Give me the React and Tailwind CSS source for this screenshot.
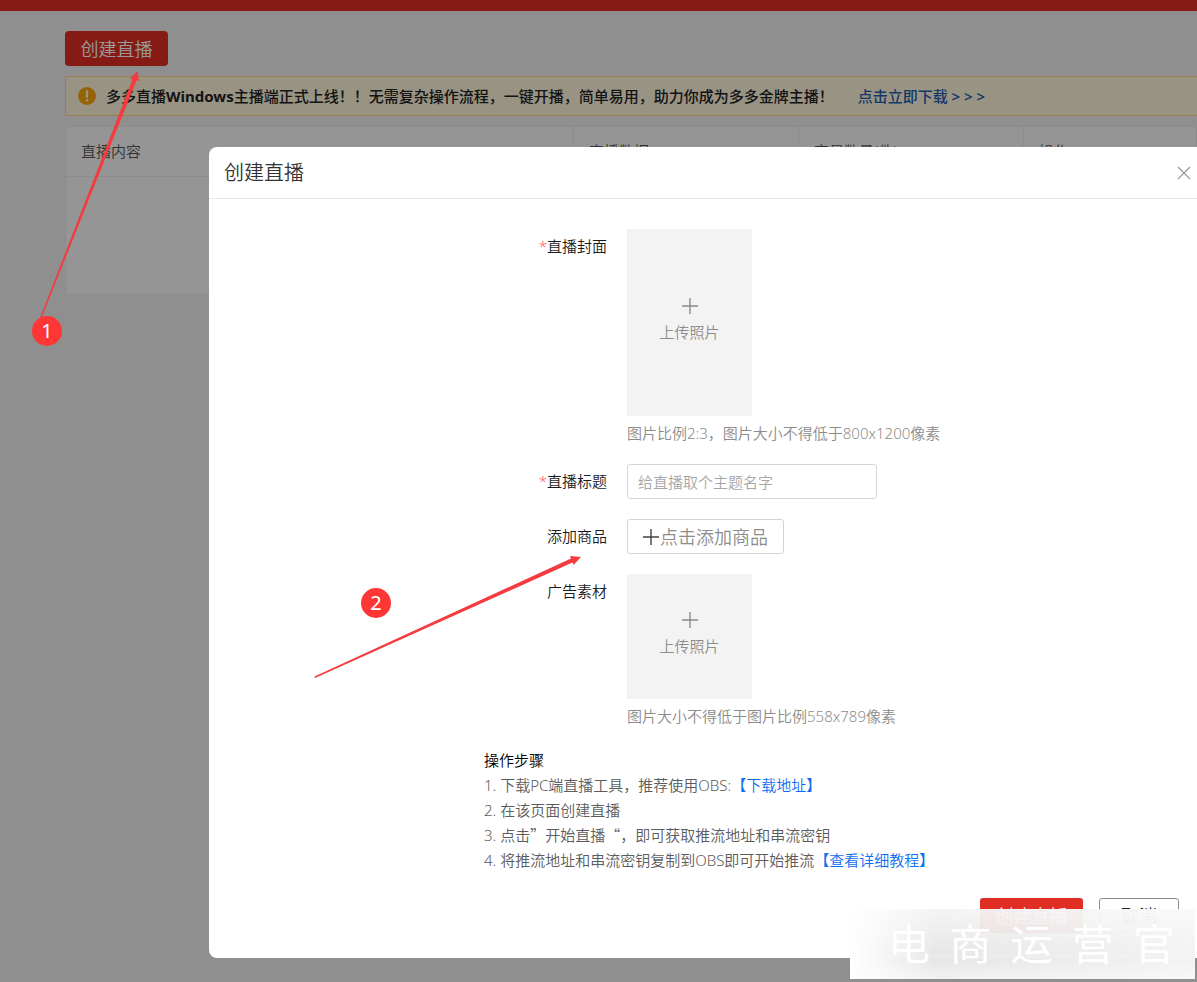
import React, { useState } from "react";

const tableHeads = ["直播内容", "直播数据", "交易数量(件)", "操作"];

const PlusIcon = ({ className }) => (
    <svg viewBox="0 0 16 16" className={className} fill="none" stroke="currentColor" strokeWidth="1.4" aria-hidden="true">
        <path d="M8 0v16M0 8h16" />
    </svg>
);

const UploadBox = ({ id, className }) => (
    <>
        <label
            htmlFor={id}
            className={`flex w-[125px] cursor-pointer flex-col items-center justify-center bg-[#f3f3f3] pb-1.5 text-[#8c8c8c] ${className}`}
        >
            <PlusIcon className="size-4" />
            <span className="mt-2 leading-5">上传照片</span>
        </label>
        <input id={id} type="file" className="sr-only" />
    </>
);

const Row = ({ label, htmlFor, required, children }) => (
    <div className="flex gap-5">
        <label htmlFor={htmlFor} className="w-[398px] shrink-0 text-right leading-[35px] text-[#1a1a1a]">
            {required && <span className="text-[#ff5c5c]">*</span>}
            {label}
        </label>
        <div className="relative">{children}</div>
    </div>
);

const Page = () => (
    <div className="min-h-screen bg-[#efefef]">
        <div className="h-[11px] bg-[#e02e24]" />
        <main className="pl-[65px] pt-5">
            <button type="button" className="h-[35px] w-[103px] rounded-sm bg-[#e02e24] text-lg leading-none text-white">
                创建直播
            </button>
            <div className="mt-2.5 flex h-10 items-center border border-r-0 border-[#ffd77a] bg-[#fff6dc] pl-3 font-medium text-[#222]">
                <svg viewBox="0 0 18 18" className="mr-2.5 size-[18px]" aria-hidden="true">
                    <circle cx="9" cy="9" r="9" fill="#faa70c" />
                    <path d="M9 4v6" stroke="#fff6dc" strokeWidth="2.2" strokeLinecap="round" />
                    <circle cx="9" cy="13.3" r="1.3" fill="#fff6dc" />
                </svg>
                <span>
                    多多直播<b className="font-bold">Windows</b>主播端正式上线！！无需复杂操作流程，一键开播，简单易用，助力你成为多多金牌主播！
                </span>
                <a href="#" className="ml-6 text-[#1d5fb0]">
                    点击立即下载 <b className="font-semibold">&gt; &gt; &gt;</b>
                </a>
            </div>
            <table className="mt-2.5 w-full table-fixed border border-[#eaeaea] bg-[#f9f9f9] text-left text-[#555]">
                <colgroup>
                    <col />
                    <col className="w-[225px]" />
                    <col className="w-[225px]" />
                    <col className="w-[173px]" />
                </colgroup>
                <thead>
                    <tr className="h-[50px]">
                        {tableHeads.map((head) => (
                            <th key={head} className="border border-[#eaeaea] px-[15px] font-[350]">{head}</th>
                        ))}
                    </tr>
                </thead>
                <tbody>
                    <tr className="h-[118px]">
                        <td colSpan={4} />
                    </tr>
                </tbody>
            </table>
        </main>
    </div>
);

const CreateDialog = () => {
    const [title, setTitle] = useState("");

    return (
        <section role="dialog" aria-labelledby="dialog-title" className="rounded-l-lg bg-white pb-[25px]">
            <header className="flex h-[52px] items-center justify-between border-b border-[#e8e8e8] pl-[15px] pr-1.5">
                <h2 id="dialog-title" className="text-xl font-[350] text-[#333]">创建直播</h2>
                <button type="button" aria-label="关闭">
                    <svg viewBox="0 0 14 14" className="size-3.5" fill="none" stroke="#999" strokeWidth="1.2">
                        <path d="M1 1l12 12M13 1L1 13" />
                    </svg>
                </button>
            </header>

            <form className="pt-[30px]">
                <div className="flex flex-col gap-5">
                    <Row label="直播封面" htmlFor="cover" required>
                        <UploadBox id="cover" className="h-[187px]" />
                        <p className="h-7 leading-[35px] text-[#8c8c8c]">图片比例2:3，图片大小不得低于800x1200像素</p>
                    </Row>
                    <Row label="直播标题" htmlFor="title" required>
                        <input
                            id="title"
                            type="text"
                            value={title}
                            onChange={(e) => setTitle(e.target.value)}
                            placeholder="给直播取个主题名字"
                            className="block h-[35px] w-[250px] rounded-[3px] border border-[#d4d4d4] px-2.5 placeholder:text-[#a6a6a6]"
                        />
                    </Row>
                    <Row label="添加商品" htmlFor="goods">
                        <button
                            id="goods"
                            type="button"
                            className="flex h-[35px] w-[157px] items-center justify-center rounded-[3px] border border-[#d4d4d4] text-lg leading-none text-[#8c8c8c]"
                        >
                            <PlusIcon className="mr-px size-4 text-[#444]" />
                            点击添加商品
                        </button>
                    </Row>
                    <Row label="广告素材" htmlFor="material">
                        <UploadBox id="material" className="h-[125px]" />
                        <p className="leading-[35px] text-[#8c8c8c]">图片大小不得低于图片比例558x789像素</p>
                    </Row>
                </div>

                <div className="ml-[275px] mt-3.5 leading-[25px] text-[#5c5c5c]">
                    <h3 className="text-black">操作步骤</h3>
                    <ol>
                        <li>1. 下载PC端直播工具，推荐使用OBS:<a href="#" className="text-[#0b6ef5]">【下载地址】</a></li>
                        <li>2. 在该页面创建直播</li>
                        <li>
                            3. <span className="font-['Noto_Sans_CJK_SC',sans-serif] leading-none">点击”开始直播“，即可获取推流地址和串流密钥</span>
                        </li>
                        <li>4. 将推流地址和串流密钥复制到OBS即可开始推流<a href="#" className="text-[#0b6ef5]">【查看详细教程】</a></li>
                    </ol>
                </div>

                <div className="mt-[25px] flex justify-end gap-4 pr-[18px] text-lg leading-none">
                    <button type="submit" className="h-[35px] w-[103px] rounded-[3px] bg-[#e02e24] text-white">创建直播</button>
                    <button type="button" className="h-[35px] w-20 rounded-[3px] border border-[#888] text-[#222]">取消</button>
                </div>
            </form>
        </section>
    );
};

const Step = ({ children, className }) => (
    <span className={`absolute flex size-[30px] items-center justify-center rounded-full bg-[#ff3636] text-xl font-normal leading-none text-white ${className}`}>
        {children}
    </span>
);

const Annotations = () => (
    <div className="pointer-events-none absolute inset-0">
        <svg width="600" height="700" className="absolute left-0 top-0" fill="#f43b3f" aria-hidden="true">
            <path d="M40 318L132.500 79.500L130 78.500L137.500 71L139 81L136.500 80.500L41.500 318Z" />
            <path d="M314.500 676.500L571 558.500L570 556L581 557L573.500 565L572.500 562.500L315 678Z" />
        </svg>
        <Step className="left-8 top-[316px]">1</Step>
        <Step className="left-[361px] top-[588px]">2</Step>
    </div>
);

const Watermark = () => (
    <div className="pointer-events-none absolute bottom-[3px] right-0.5 h-[70px] w-[345px] bg-linear-to-b from-[#f4f4f4]/95 via-[#e6e6e6]/95 via-60% to-[#f4f4f4]/97">
        <div className="flex h-full items-center justify-between bg-linear-to-r from-white via-white/0 via-25% to-white/50 pl-[38px] pr-5 text-[42px] font-normal leading-none text-white">
            {["电", "商", "运", "营", "官"].map((char) => (
                <span key={char}>{char}</span>
            ))}
        </div>
    </div>
);

const App = () => (
    <div className="relative overflow-hidden font-['Noto_Sans','Noto_Sans_CJK_SC',sans-serif] text-[15px] font-[350]">
        <Page />
        <div className="absolute inset-0 bg-black/40 pl-[209px] pt-[147px]">
            <CreateDialog />
        </div>
        <Annotations />
        <Watermark />
    </div>
);

export default App;
